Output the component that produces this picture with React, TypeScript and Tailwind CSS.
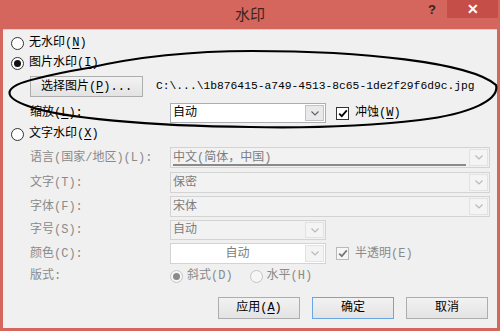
import type { ReactNode } from "react";

const MONO_CJK = "[font-family:'Liberation_Mono','Noto_Sans_CJK_SC',monospace]";

function Key({ k }: { k: string }) {
  return <span className="underline underline-offset-2">{k}</span>;
}

function Radio({ checked, disabled }: { checked?: boolean; disabled?: boolean }) {
  return (
    <span
      className={`flex h-[13px] w-[13px] shrink-0 items-center justify-center rounded-full border ${
        disabled ? "border-[#c4c4c4] bg-[#f6f6f6]" : "border-[#333] bg-white"
      }`}
    >
      {checked ? (
        <span
          className={`h-[7px] w-[7px] rounded-full ${disabled ? "bg-[#8a8a8a]" : "bg-[#111]"}`}
        />
      ) : null}
    </span>
  );
}

function Checkbox({ disabled }: { disabled?: boolean }) {
  return (
    <span
      className={`flex h-[13px] w-[13px] shrink-0 items-center justify-center border ${
        disabled ? "border-[#b9b9b9] bg-[#f6f6f6]" : "border-[#333] bg-white"
      }`}
    >
      <svg width="10" height="9" viewBox="0 0 10 9">
        <path
          d="M1.2 4.6 L3.8 7.2 L8.8 1.4"
          fill="none"
          stroke={disabled ? "#7a7a7a" : "#000"}
          strokeWidth="1.8"
        />
      </svg>
    </span>
  );
}

function Chevron({ color }: { color: string }) {
  return (
    <svg width="8" height="5" viewBox="0 0 8 5">
      <path d="M0.5 0.5 L4 4 L7.5 0.5" fill="none" stroke={color} strokeWidth="1.1" />
    </svg>
  );
}

function Select({
  text,
  width,
  disabled,
  white,
  center,
  marked
}: {
  text: string;
  width: string;
  disabled?: boolean;
  white?: boolean;
  center?: boolean;
  marked?: boolean;
}) {
  const bg = white || !disabled ? "bg-white" : "bg-[#f2f2f2]";
  return (
    <div
      className={`flex h-full ${width} items-stretch border ${
        disabled ? "border-[#d3d3d3]" : "border-[#abadb3]"
      } ${bg}`}
    >
      <div
        className={`relative flex min-w-0 flex-1 items-center px-[2px] text-[12px] ${
          center ? "justify-center" : ""
        } ${disabled ? "text-[#7d7d7d]" : "text-black"}`}
      >
        <span className={marked ? "underline decoration-[#7a7a7a] underline-offset-[3px]" : ""}>
          {text}
        </span>
        {marked ? (
          <span className="absolute bottom-[1px] left-[2px] right-[2px] h-[2px] bg-[#8a8a8a]" />
        ) : null}
      </div>
      <div
        className={`m-[1px] flex w-[19px] items-center justify-center border ${
          disabled
            ? "border-[#e2e2e2] bg-[#f4f4f4]"
            : "border-[#c3c3c3] bg-[#e9e9e9]"
        }`}
      >
        <Chevron color={disabled ? "#b8b8b8" : "#606060"} />
      </div>
    </div>
  );
}

function Button({ children, primary }: { children: ReactNode; primary?: boolean }) {
  return (
    <div
      className={`flex h-full w-[82px] items-center justify-center border bg-gradient-to-b from-[#f2f2f2] to-[#e3e3e3] text-[12px] text-black ${
        primary ? "border-[#6aa6e3]" : "border-[#adadad]"
      }`}
    >
      {children}
    </div>
  );
}

function Label({ children, disabled }: { children: ReactNode; disabled?: boolean }) {
  return (
    <div
      className={`w-[140px] shrink-0 text-[12px] ${disabled ? "text-[#8a8a8a]" : "text-black"}`}
    >
      {children}
    </div>
  );
}

export default function App() {
  return (
    <div
      className={`relative h-[331px] w-[500px] overflow-hidden bg-[#d4665d] ${MONO_CJK} leading-none`}
    >
      {/* title bar */}
      <div className="grid h-[29px] grid-cols-[1fr_auto_1fr] items-start">
        <div />
        <div className="pt-[6px] text-[15px] text-[#3b2420] [font-family:'Noto_Sans_CJK_SC',sans-serif]">
          水印
        </div>
        <div className="flex items-start justify-end pr-[2px]">
          <span className="mr-[11px] mt-[3px] text-[13px] font-bold text-[#3a2320] [font-family:'Liberation_Sans',sans-serif]">
            ?
          </span>
          <span className="flex h-[18px] w-[51px] items-center justify-center bg-[#c54f48] text-[14px] font-bold text-white [font-family:'Liberation_Sans',sans-serif]">
            ✕
          </span>
        </div>
      </div>

      {/* client area */}
      <div className="mx-[3px] flex h-[299px] flex-col border-t border-[#e6c9c5] bg-[#f0f0f0]">
        <div className="mt-[3px] flex h-[20px] items-center gap-[5px] pl-[8px] text-[12px]">
          <Radio />
          <span>
            无水印(<Key k="N" />)
          </span>
        </div>
        <div className="flex h-[20px] items-center gap-[5px] pl-[8px] text-[12px]">
          <Radio checked />
          <span>
            图片水印(<Key k="I" />)
          </span>
        </div>
        <div className="mt-[3px] flex h-[21px] items-center pl-[27px]">
          <div className="h-full">
            <div className="flex h-full w-[113px] items-center justify-center border border-[#adadad] bg-gradient-to-b from-[#f2f2f2] to-[#e3e3e3] text-[12px]">
              <span>
                选择图片(<Key k="P" />)...
              </span>
            </div>
          </div>
          <span className="ml-[13px] text-[11.3px] text-black">
            C:\...\1b876415-a749-4513-8c65-1de2f29f6d9c.jpg
          </span>
        </div>
        <div className="mt-[6px] flex h-[20px] items-center pl-[27px]">
          <Label>
            缩放(<Key k="L" />):
          </Label>
          <Select text="自动" width="w-[156px]" />
          <span className="ml-[10px]">
            <Checkbox />
          </span>
          <span className="ml-[6px] text-[12px]">
            冲蚀(<Key k="W" />)
          </span>
        </div>
        <div className="mt-[1px] flex h-[20px] items-center gap-[5px] pl-[8px] text-[12px]">
          <Radio />
          <span>
            文字水印(<Key k="X" />)
          </span>
        </div>
        <div className="mt-[3px] flex h-[21px] items-center pl-[27px]">
          <Label disabled>语言(国家/地区)(L):</Label>
          <Select text="中文(简体，中国)" width="w-[320px]" disabled marked />
        </div>
        <div className="mt-[4px] flex h-[21px] items-center pl-[27px]">
          <Label disabled>文字(T):</Label>
          <Select text="保密" width="w-[320px]" disabled />
        </div>
        <div className="mt-[3px] flex h-[21px] items-center pl-[27px]">
          <Label disabled>字体(F):</Label>
          <Select text="宋体" width="w-[320px]" disabled />
        </div>
        <div className="mt-[3px] flex h-[20px] items-center pl-[27px]">
          <Label disabled>字号(S):</Label>
          <Select text="自动" width="w-[156px]" disabled />
        </div>
        <div className="mt-[3px] flex h-[21px] items-center pl-[27px]">
          <Label disabled>颜色(C):</Label>
          <Select text="自动" width="w-[156px]" disabled white center />
          <span className="ml-[10px]">
            <Checkbox disabled />
          </span>
          <span className="ml-[6px] text-[12px] text-[#8a8a8a]">半透明(E)</span>
        </div>
        <div className="mt-[2px] flex h-[20px] items-center pl-[27px] text-[12px] text-[#8a8a8a]">
          <Label disabled>版式:</Label>
          <span className="flex items-center gap-[4px]">
            <Radio checked disabled />
            斜式(D)
          </span>
          <span className="ml-[17px] flex items-center gap-[4px]">
            <Radio disabled />
            水平(H)
          </span>
        </div>
        <div className="mt-[11px] flex h-[22px] items-stretch justify-end gap-[12px] pr-[9px]">
          <Button>
            应用(<Key k="A" />)
          </Button>
          <Button primary>确定</Button>
          <Button>取消</Button>
        </div>
      </div>

      {/* hand-drawn annotation ellipse */}
      <svg
        className="pointer-events-none absolute left-0 top-0"
        width="500"
        height="331"
        viewBox="0 0 500 331"
      >
        <path
          d="M88 68 C140 56 200 51 252 51 C360 51 470 62 496 85 C500 100 470 114 420 120 C360 127 300 128 250 127 C150 126 60 118 28 106 C0 96 5 86 35 79 C50 75 70 71 88 68"
          fill="none"
          stroke="#000"
          strokeWidth="2.2"
          strokeLinecap="round"
        />
      </svg>
    </div>
  );
}
